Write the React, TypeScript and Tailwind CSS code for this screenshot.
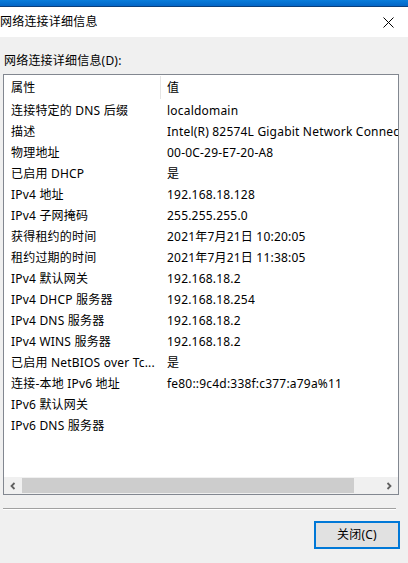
import React from 'react';

const rows: [string, string][] = [
  ['连接特定的 DNS 后缀', 'localdomain'],
  ['描述', 'Intel(R) 82574L Gigabit Network Connection'],
  ['物理地址', '00-0C-29-E7-20-A8'],
  ['已启用 DHCP', '是'],
  ['IPv4 地址', '192.168.18.128'],
  ['IPv4 子网掩码', '255.255.255.0'],
  ['获得租约的时间', '2021年7月21日 10:20:05'],
  ['租约过期的时间', '2021年7月21日 11:38:05'],
  ['IPv4 默认网关', '192.168.18.2'],
  ['IPv4 DHCP 服务器', '192.168.18.254'],
  ['IPv4 DNS 服务器', '192.168.18.2'],
  ['IPv4 WINS 服务器', '192.168.18.2'],
  ['已启用 NetBIOS over Tc...', '是'],
  ['连接-本地 IPv6 地址', 'fe80::9c4d:338f:c377:a79a%11'],
  ['IPv6 默认网关', ''],
  ['IPv6 DNS 服务器', ''],
];

const font = { fontFamily: '"Noto Sans", "Noto Sans CJK SC", sans-serif' };

function Chevron({ dir }: { dir: 'left' | 'right' }) {
  return (
    <svg width="8" height="8" viewBox="0 0 8 8">
      <path
        d={dir === 'left' ? 'M5.5 1 L2.5 4 L5.5 7' : 'M2.5 1 L5.5 4 L2.5 7'}
        stroke="#606060"
        strokeWidth="1.8"
        fill="none"
      />
    </svg>
  );
}

export default function App() {
  return (
    <div className="w-[408px] h-[563px] bg-[#f0f0f0] overflow-hidden flex flex-col text-black tracking-[0.2px]" style={font}>
      {/* 后面窗口的标题栏 */}
      <div className="h-[7px] bg-gradient-to-b from-[#0a7ddb] to-[#0466c6] border-b border-[#0b3f7c]" />

      <div className="h-[30px] bg-white flex items-center justify-between">
        <span className="text-[12px] leading-none">网络连接详细信息</span>
        <svg width="11" height="11" viewBox="0 0 11 11" className="mr-[14px]">
          <path d="M0.5 0.5 L10.5 10.5 M10.5 0.5 L0.5 10.5" stroke="#000" strokeWidth="1" />
        </svg>
      </div>

      <div className="px-[3px] flex flex-col">
        <div className="mt-[16px] pl-[1px] text-[12px] leading-[16px]">网络连接详细信息(D):</div>

        <div className="mt-[5px] w-[396px] h-[421px] border border-[#828790] bg-white flex flex-col">
          <div className="h-[25px] flex text-[12px] shrink-0">
            <div className="w-[157px] flex items-center pl-[7px] border-r border-[#e5e5e5] my-[1px]">属性</div>
            <div className="flex items-center pl-[6px]">值</div>
          </div>

          <div className="flex-1 overflow-hidden">
            {rows.map(([k, v]) => (
              <div key={k} className="h-[21px] flex items-center text-[12px] whitespace-nowrap">
                <div className="w-[156px] shrink-0 pl-[7px] overflow-hidden">{k}</div>
                <div className="pl-[7px] overflow-hidden">{v}</div>
              </div>
            ))}
          </div>

          <div className="h-[17px] shrink-0 flex bg-[#f0f0f0] items-stretch">
            <div className="w-[18px] flex items-center justify-center">
              <Chevron dir="left" />
            </div>
            <div className="w-[332px] bg-[#cdcdcd] my-[1px]" />
            <div className="flex-1" />
            <div className="w-[18px] flex items-center justify-center">
              <Chevron dir="right" />
            </div>
          </div>
        </div>

        <div className="mt-[13px] w-[393px] border-t border-[#a0a0a0] border-b border-b-white" />

        <div className="flex justify-end mt-[11px] pr-[5px]">
          <button className="w-[86px] h-[28px] border-2 border-[#0078d7] bg-[#e1e1e1] text-[12px] flex items-center justify-center">
            关闭(C)
          </button>
        </div>
      </div>
    </div>
  );
}
